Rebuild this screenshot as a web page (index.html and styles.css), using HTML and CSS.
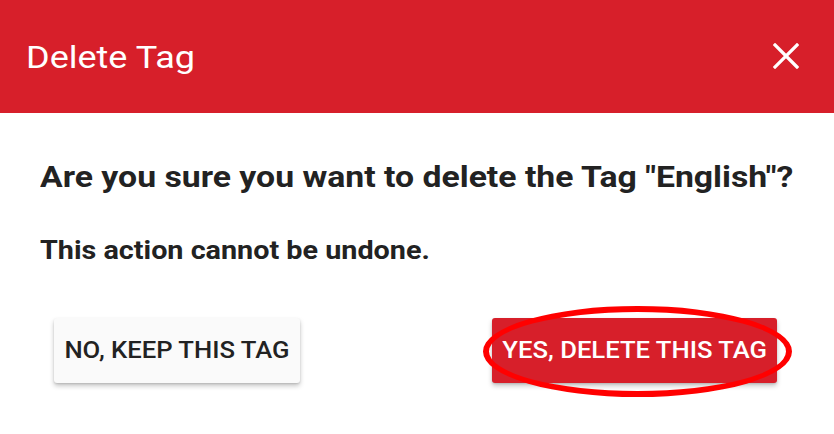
FILE: index.html
```html
<!DOCTYPE html>
<html>
<head>
<meta charset="utf-8">
<link rel="stylesheet" href="styles.css">
</head>
<body>
<div class="dialog">
  <header class="dialog-header">
    <h1 class="dialog-title"><span class="wide wide-title">Delete Tag</span></h1>
    <button class="close-btn" aria-label="Close">
      <svg width="26" height="26" viewBox="0 0 26 26"><path d="M2 2L24 24M24 2L2 24" stroke="#fff" stroke-width="3.2" stroke-linecap="square" fill="none"/></svg>
    </button>
  </header>
  <div class="dialog-body">
    <p class="question"><span class="wide wide-question">Are you sure you want to delete the Tag "English"?</span></p>
    <p class="note"><span class="wide wide-note">This action cannot be undone.</span></p>
  </div>
  <div class="dialog-actions">
    <button class="btn btn-keep"><span class="wide wide-btn">NO, KEEP THIS TAG</span></button>
    <div class="confirm-wrap">
      <button class="btn btn-delete"><span class="wide wide-btn">YES, DELETE THIS TAG</span></button>
      <span class="highlight-ring"></span>
    </div>
  </div>
</div>
</body>
</html>
```

FILE: styles.css
```css
* { box-sizing: border-box; }
html, body { margin: 0; padding: 0; background: #fff; }
body { font-family: Roboto, "Noto Sans", sans-serif; width: 834px; height: 434px; overflow: hidden; }

.dialog { width: 834px; height: 434px; background: #fff; }

.wide { display: inline-block; transform-origin: left center; white-space: nowrap; }
.wide-title { transform: scaleX(1.125); }
.wide-question { transform: scaleX(1.164); }
.wide-note { transform: scaleX(1.15); }
.wide-btn { transform: scaleX(1.115); transform-origin: center center; }

.dialog-header {
  height: 113px;
  background: #d71f2a;
  display: flex;
  align-items: center;
  justify-content: space-between;
  padding: 0 35px 0 26px;
}
.dialog-title {
  margin: 0;
  color: #fff;
  font-weight: 400;
  font-size: 32px;
}
.close-btn {
  background: none;
  border: 0;
  padding: 0;
  width: 26px;
  height: 26px;
  display: flex;
  margin-top: -2px;
}

.dialog-body { padding: 47px 40px 0 40px; }
.question {
  margin: 0;
  font-size: 29px;
  font-weight: 700;
  color: #222;
  line-height: 34px;
}
.note {
  margin: 42px 0 0;
  font-size: 25px;
  font-weight: 700;
  color: #222;
  line-height: 30px;
}

.dialog-actions {
  display: flex;
  justify-content: space-between;
  padding: 52px 57px 0 54px;
}
.btn {
  height: 65px;
  border: 0;
  border-radius: 3px;
  font-family: Roboto, sans-serif;
  font-weight: 500;
  font-size: 23px;
  padding: 0;
  box-shadow: 0 3px 5px rgba(0,0,0,0.22), 0 1px 2px rgba(0,0,0,0.12);
}
.btn-keep { background: #fafafa; color: #222; width: 246px; }
.btn-delete { background: #d71f2a; color: #fff; width: 285px; }

.confirm-wrap { position: relative; }
.highlight-ring {
  position: absolute;
  left: -9px;
  top: -12px;
  width: 309px;
  height: 91px;
  border: 6px solid #ff0000;
  border-radius: 50%;
  pointer-events: none;
}
```
